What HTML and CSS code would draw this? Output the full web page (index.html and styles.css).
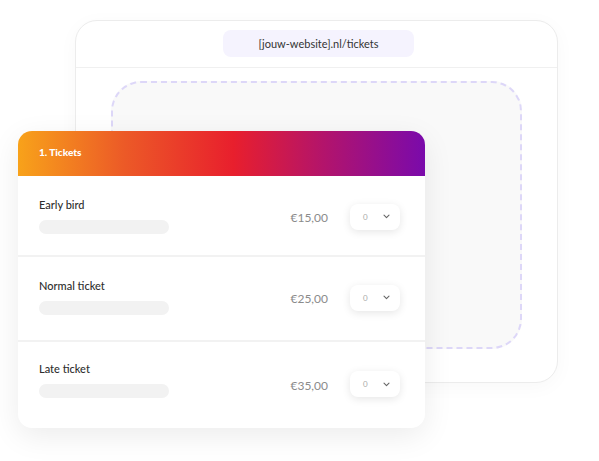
FILE: index.html
```html
<!DOCTYPE html>
<html lang="nl">
<head>
    <meta charset="UTF-8">
    <meta name="viewport" content="width=device-width, initial-scale=1.0">
    <title>Tickets</title>
    <link rel="stylesheet" href="styles.css">
</head>
<body>
    <div class="stage">
        <div class="browser">
            <div class="browser-bar">
                <div class="address">[jouw-website].nl/tickets</div>
            </div>
            <div class="browser-body">
                <div class="dropzone"></div>
            </div>
        </div>

        <div class="ticket-card">
            <div class="ticket-header">1. Tickets</div>

            <div class="ticket-row first">
                <div class="ticket-info">
                    <div class="ticket-name">Early bird</div>
                    <div class="ticket-bar"></div>
                </div>
                <div class="ticket-price">€15,00</div>
                <div class="qty-select">
                    <span>0</span>
                    <svg width="7" height="5" viewBox="0 0 7 5"><path d="M1 1.2 3.5 3.7 6 1.2" fill="none" stroke="#666" stroke-width="1.1" stroke-linecap="round" stroke-linejoin="round"/></svg>
                </div>
            </div>

            <div class="ticket-row">
                <div class="ticket-info">
                    <div class="ticket-name">Normal ticket</div>
                    <div class="ticket-bar"></div>
                </div>
                <div class="ticket-price">€25,00</div>
                <div class="qty-select">
                    <span>0</span>
                    <svg width="7" height="5" viewBox="0 0 7 5"><path d="M1 1.2 3.5 3.7 6 1.2" fill="none" stroke="#666" stroke-width="1.1" stroke-linecap="round" stroke-linejoin="round"/></svg>
                </div>
            </div>

            <div class="ticket-row last">
                <div class="ticket-info">
                    <div class="ticket-name">Late ticket</div>
                    <div class="ticket-bar"></div>
                </div>
                <div class="ticket-price">€35,00</div>
                <div class="qty-select">
                    <span>0</span>
                    <svg width="7" height="5" viewBox="0 0 7 5"><path d="M1 1.2 3.5 3.7 6 1.2" fill="none" stroke="#666" stroke-width="1.1" stroke-linecap="round" stroke-linejoin="round"/></svg>
                </div>
            </div>
        </div>
    </div>
</body>
</html>
```

FILE: styles.css
```css
body {
    margin: 0;
    background-color: #fff;
    font-family: Lato, "Open Sans", sans-serif;
    color: #333;
}
.stage {
    position: relative;
    width: 599px;
    height: 461px;
    padding: 20px 0 0 75px;
    box-sizing: border-box;
}
.browser {
    width: 483px;
    height: 363px;
    box-sizing: border-box;
    border: 1px solid #ececec;
    border-radius: 22px;
    background-color: #fff;
    box-shadow: 0 4px 20px rgba(0, 0, 0, 0.03);
}
.browser-bar {
    height: 47px;
    box-sizing: border-box;
    padding-top: 9px;
    border-bottom: 1px solid #f0f0f0;
    display: flex;
    justify-content: center;
}
.address {
    width: 191px;
    height: 27px;
    margin-left: 4px;
    border-radius: 8px;
    background-color: #f5f3fe;
    font-size: 11px;
    line-height: 27px;
    text-align: center;
    color: #333;
}
.browser-body {
    padding: 13px 35px 0 35px;
}
.dropzone {
    height: 268px;
    box-sizing: border-box;
    border: 2px dashed #ddd7f8;
    border-radius: 30px;
    background-color: #f9f9f9;
}
.ticket-card {
    position: absolute;
    left: 18px;
    top: 131px;
    width: 407px;
    height: 297px;
    border-radius: 14px;
    background-color: #fff;
    overflow: hidden;
    box-shadow: 0 8px 30px rgba(0, 0, 0, 0.08);
    display: flex;
    flex-direction: column;
}
.ticket-header {
    height: 45px;
    flex-shrink: 0;
    padding-left: 21px;
    background: linear-gradient(90deg, #f8a21a 0%, #ec5a27 26%, #e81f2d 53%, #b3146b 75%, #7a0aab 100%);
    color: #fff;
    font-size: 10px;
    font-weight: 900;
    line-height: 42px;
}
.ticket-row {
    display: flex;
    align-items: center;
    padding: 21px 25px 25px 21px;
    border-bottom: 2px solid #f2f2f2;
}
.ticket-row.first {
    padding-bottom: 21px;
}
.ticket-row.last {
    border-bottom: none;
    flex: 1;
    padding: 17px 25px 29px 21px;
}
.ticket-info {
    flex: 1;
}
.ticket-name {
    font-size: 11px;
    font-weight: 500;
    line-height: 15px;
    color: #2e2e2e;
}
.ticket-bar {
    width: 130px;
    height: 14px;
    margin-top: 8px;
    border-radius: 7px;
    background-color: #f2f2f2;
}
.ticket-price {
    margin: 4px 22px 0 0;
    font-size: 12px;
    color: #8b8b8b;
}
.qty-select {
    width: 50px;
    height: 26px;
    margin-top: 2px;
    box-sizing: border-box;
    padding: 0 10px 0 13px;
    border-radius: 8px;
    background-color: #fff;
    box-shadow: 0 2px 8px rgba(0, 0, 0, 0.1);
    display: flex;
    align-items: center;
    justify-content: space-between;
    font-size: 8px;
    color: #aaa;
}
.ticket-row.last .ticket-price {
    margin-top: 12px;
}
.ticket-row.last .qty-select {
    margin-top: 10px;
}
```
